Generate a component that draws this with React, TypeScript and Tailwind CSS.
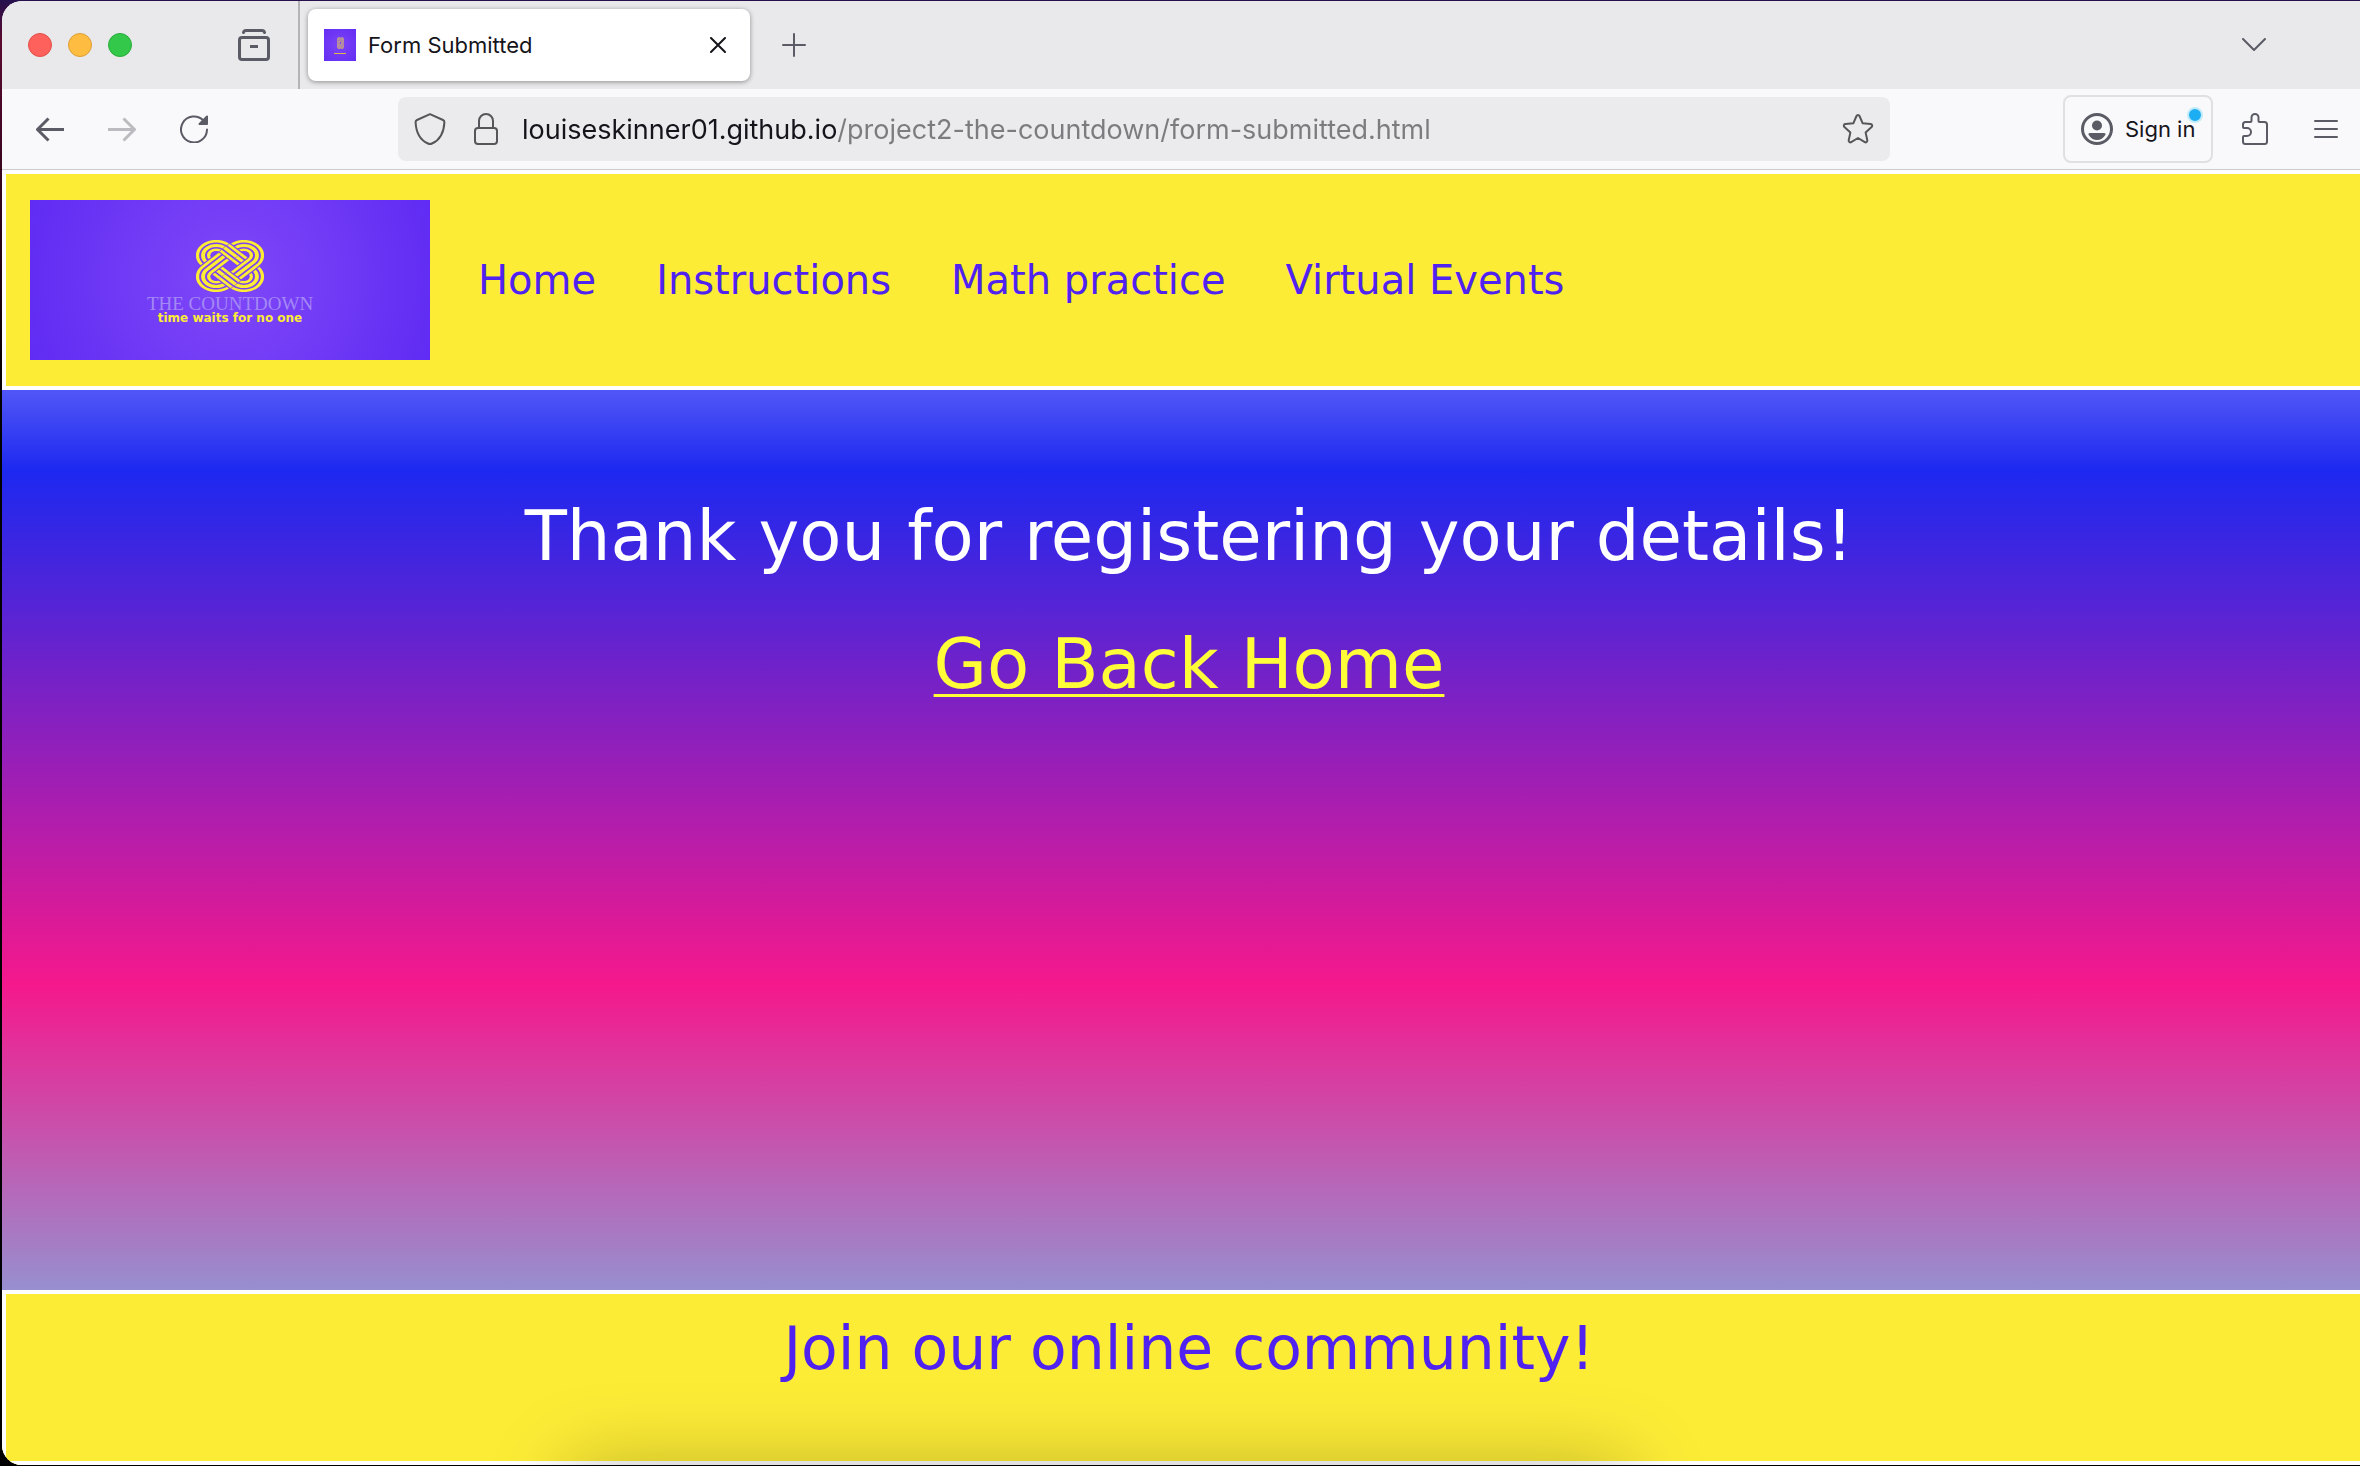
import type { ReactNode } from 'react';

type IconProps = { size: string; box: string; children: ReactNode; stroke?: number };

function Icon({ size, box, children, stroke = 3 }: IconProps) {
  return (
    <svg
      className={size}
      viewBox={box}
      fill="none"
      stroke="currentColor"
      strokeWidth={stroke}
      strokeLinecap="round"
      strokeLinejoin="round"
      aria-hidden="true"
    >
      {children}
    </svg>
  );
}

const bandLayers: [string, number][] = [
  ['#7a42f4', 13],
  ['#fdec36', 11],
  ['#7a42f4', 6],
  ['#fdec36', 3],
];

function Knot({ className }: { className: string }) {
  return (
    <svg className={className} viewBox="0 0 52 52" preserveAspectRatio="none" fill="none" aria-hidden="true">
      {[45, -45].map((angle) => (
        <g key={angle} transform={`rotate(${angle} 26 26)`}>
          {bandLayers.map(([color, width]) => (
            <rect key={width} x="1" y="16" width="50" height="20" rx="10" stroke={color} strokeWidth={width} />
          ))}
        </g>
      ))}
      <g transform="rotate(45 26 26)">
        {bandLayers.map(([color, width]) => (
          <path key={width} d="M10 16h13M29 36h13" stroke={color} strokeWidth={width} />
        ))}
      </g>
    </svg>
  );
}

function TabStrip() {
  return (
    <div className="flex h-[88px] items-center bg-[#e9e9eb] pl-[26px] text-[#5b5b66]">
      <div className="flex gap-4">
        <button aria-label="Close window" className="size-6 rounded-full border border-[#e2504b] bg-[#fe605b]" />
        <button aria-label="Minimise window" className="size-6 rounded-full border border-[#dc9f37] bg-[#febc40]" />
        <button aria-label="Zoom window" className="size-6 rounded-full border border-[#2aab3c] bg-[#34c84a]" />
      </div>
      <button aria-label="Recent browsing" className="ml-[106px]">
        <Icon size="size-8" box="0 0 32 32">
          <path d="M5.500 3.500c.3-1.300 1-2 2.500-2h16c1.500 0 2.200.7 2.500 2" />
          <rect x="1.500" y="8.500" width="29" height="22" rx="2.500" />
          <path d="M12 17.500h8" strokeLinecap="butt" />
        </Icon>
      </button>
      <div className="ml-7 h-full w-[2px] bg-[#b4b4b8]" />
      <div className="ml-2 flex h-[72px] w-[442px] items-center rounded-lg bg-white px-4 shadow-[0_1px_5px_rgba(0,0,0,0.4)]">
        <div className="flex size-8 flex-col items-center justify-center gap-1 bg-[radial-gradient(#7d45f6,#642cf2)]">
          <Knot className="h-3 w-[7px] opacity-80" />
          <div className="h-px w-3 bg-[#e0b84c]" />
        </div>
        <span className="ml-3 text-[22px] leading-8 text-[#15141a]">Form Submitted</span>
        <button aria-label="Close tab" className="mr-2 ml-auto text-[#15141a]">
          <Icon size="size-4" box="0 0 16 16" stroke={2}>
            <path d="M1 1l14 14M15 1L1 15" />
          </Icon>
        </button>
      </div>
      <button aria-label="New tab" className="ml-8">
        <Icon size="size-6" box="0 0 24 24" stroke={2}>
          <path d="M12 1v22M1 12h22" />
        </Icon>
      </button>
      <button aria-label="List all tabs" className="mr-[94px] ml-auto">
        <Icon size="h-[14px] w-6" box="0 0 24 14" stroke={2}>
          <path d="M1 1l11 11L23 1" />
        </Icon>
      </button>
    </div>
  );
}

function Toolbar() {
  return (
    <div className="flex h-[81px] items-center border-b border-[#cccccf] bg-[#f9f9fb] pr-[22px] pl-[34px] text-[#5b5b66]">
      <div className="flex gap-11">
        <button aria-label="Back">
          <Icon size="size-7" box="0 0 28 28">
            <path d="M2 14.500h26M12.500 3.500l-11 11 11 11" strokeLinecap="butt" />
          </Icon>
        </button>
        <button aria-label="Forward" disabled className="text-[#bbbbc0]">
          <Icon size="size-7" box="0 0 28 28">
            <path d="M26 14.500H0M15.500 3.500l11 11-11 11" strokeLinecap="butt" />
          </Icon>
        </button>
        <button aria-label="Reload">
          <Icon size="size-7" box="0 0 28 28" stroke={2}>
            <path d="M23.200 5.300A13 13 0 1 0 27 14.500" />
            <path d="M27 1.500v7.500h-7.500z" fill="currentColor" />
          </Icon>
        </button>
      </div>
      <div className="mr-[173px] ml-[190px] flex h-16 flex-1 items-center rounded-lg bg-[#ebebed] px-4 text-[#55555a]">
        <button aria-label="Tracking protection">
          <Icon size="size-8" box="0 0 32 32" stroke={2}>
            <path d="M16 1.200L29 7c1 .5 1.500 1.200 1.400 2.200C30 18 27 26.500 18 30.500c-1.300.6-2.700.6-4 0C5 26.500 2 18 1.600 9.200 1.500 8.200 2 7.500 3 7z" />
          </Icon>
        </button>
        <button aria-label="Site information" className="ml-6">
          <Icon size="size-8" box="0 0 32 32" stroke={2}>
            <rect x="5" y="15" width="22" height="16" rx="3" />
            <path d="M9 15V8a7 7 0 0 1 14 0v7" />
          </Icon>
        </button>
        <input
          aria-label="Address"
          readOnly
          value="louiseskinner01.github.io/project2-the-countdown/form-submitted.html"
          className="ml-5 h-10 min-w-0 flex-1 bg-[linear-gradient(90deg,#15141a_314px,#7c7c80_314px)] bg-clip-text pt-[2px] text-[27px] text-transparent outline-none"
        />
        <button aria-label="Bookmark this page">
          <Icon size="size-8" box="0 0 32 32" stroke={2}>
            <path d="M14.500 3c.6-1.300 2.400-1.300 3 0l3.200 7.300 8 .7c1.500.2 2 2 .9 3l-6 5.400 1.700 7.900c.3 1.500-1.200 2.600-2.500 1.800L16 25l-6.800 4.100c-1.300.8-2.800-.3-2.500-1.800l1.700-7.900-6-5.400c-1.100-1-.6-2.800.9-3l8-.7z" />
          </Icon>
        </button>
      </div>
      <button className="relative flex h-[68px] w-[150px] items-center gap-3 rounded-lg border-2 border-[#e0e0e2] pl-4 text-[22px] text-[#15141a]">
        <span className="text-[#5b5b66]">
          <Icon size="size-8" box="0 0 32 32">
            <circle cx="16" cy="16" r="14.500" />
            <circle cx="16" cy="12.500" r="5" fill="currentColor" stroke="none" />
            <path d="M9 20h14c1.500 0 2 1 1.300 2C22.500 25 19.500 27 16 27s-6.500-2-8.300-5c-.7-1-.2-2 1.300-2z" fill="currentColor" stroke="none" />
          </Icon>
        </span>
        Sign in
        <span className="absolute top-[10px] right-2 size-4 rounded-full border-2 border-[#c0ebfb] bg-[#1cadf2]" />
      </button>
      <button aria-label="Extensions" className="ml-[29px]">
        <Icon size="h-8 w-[26px]" box="0 0 26 32" stroke={2}>
          <path d="M3.500 9H8.500c.6 0 1-.4 1-1V4.500a3.500 3.500 0 0 1 7 0V8c0 .6.4 1 1 1H22.500c1.400 0 2.500 1 2.500 2.500v17c0 1.500-1 2.500-2.500 2.500h-19C2 31 1 30 1 28.500V24c0-.6.4-1 1-1h3a4 4 0 0 0 0-8H2c-.6 0-1-.4-1-1v-2.500C1 10 2 9 3.500 9z" />
        </Icon>
      </button>
      <button aria-label="Open application menu" className="ml-[46px]">
        <Icon size="h-5 w-6" box="0 0 24 20" stroke={2}>
          <path d="M1 2h22M1 10h22M1 18h22" />
        </Icon>
      </button>
    </div>
  );
}

const links = ['Home', 'Instructions', 'Math practice', 'Virtual Events'];

export default function App() {
  return (
    <div className="flex min-h-screen flex-col bg-[#1c0a3c] bg-[linear-gradient(180deg,#26104e_0,#5a0a30_40px,#000_400px)] pt-px pb-px pl-[2px] font-['Inter',sans-serif]">
      <div className="relative flex flex-1 flex-col overflow-hidden rounded-l-[20px] bg-white">
        <TabStrip />
        <Toolbar />
        <header className="flex items-center gap-12 border-y-4 border-l-4 border-white bg-[#fdec36] py-[26px] pl-6 font-['DejaVu_Sans',sans-serif]">
          <a
            href="#home"
            className="flex h-40 w-[400px] flex-col items-center bg-[radial-gradient(circle,#8048f8,#602bf3)] pt-10"
          >
            <Knot className="h-[52px] w-[68px]" />
            <span className="mt-1 font-['Liberation_Serif',serif] text-[19px] leading-4 text-[#a488f5]">THE COUNTDOWN</span>
            <span className="text-[12px] leading-3 font-bold text-[#fdec36]">time waits for no one</span>
          </a>
          <nav className="flex gap-15 text-[40px] leading-[48px] text-[#4f22f0]">
            {links.map((label) => (
              <a key={label} href="#nav">
                {label}
              </a>
            ))}
          </nav>
        </header>
        <main className="flex-1 bg-[linear-gradient(180deg,#5157f6_0%,#1d28f0_9%,#f5188c_66%,#978fcf_100%)] pt-[82px] pl-4 text-center font-['DejaVu_Sans',sans-serif] text-[69px] leading-[128px]">
          <h1 className="text-white">Thank you for registering your details!</h1>
          <a href="#home" className="text-[#fffd38] underline decoration-[3px] underline-offset-[6px]">
            Go Back Home
          </a>
        </main>
        <footer className="border-y-4 border-l-4 border-white bg-[#fdec36] pt-6 pb-[83px] pl-3 text-center font-['DejaVu_Sans',sans-serif]">
          <h2 className="text-[60px] leading-[60px] text-[#4f22f0]">Join our online community!</h2>
        </footer>
        <div className="pointer-events-none absolute top-full right-[31%] left-[24%] h-20 shadow-[0_0_80px_rgba(0,0,0,0.25)]" />
      </div>
    </div>
  );
}
